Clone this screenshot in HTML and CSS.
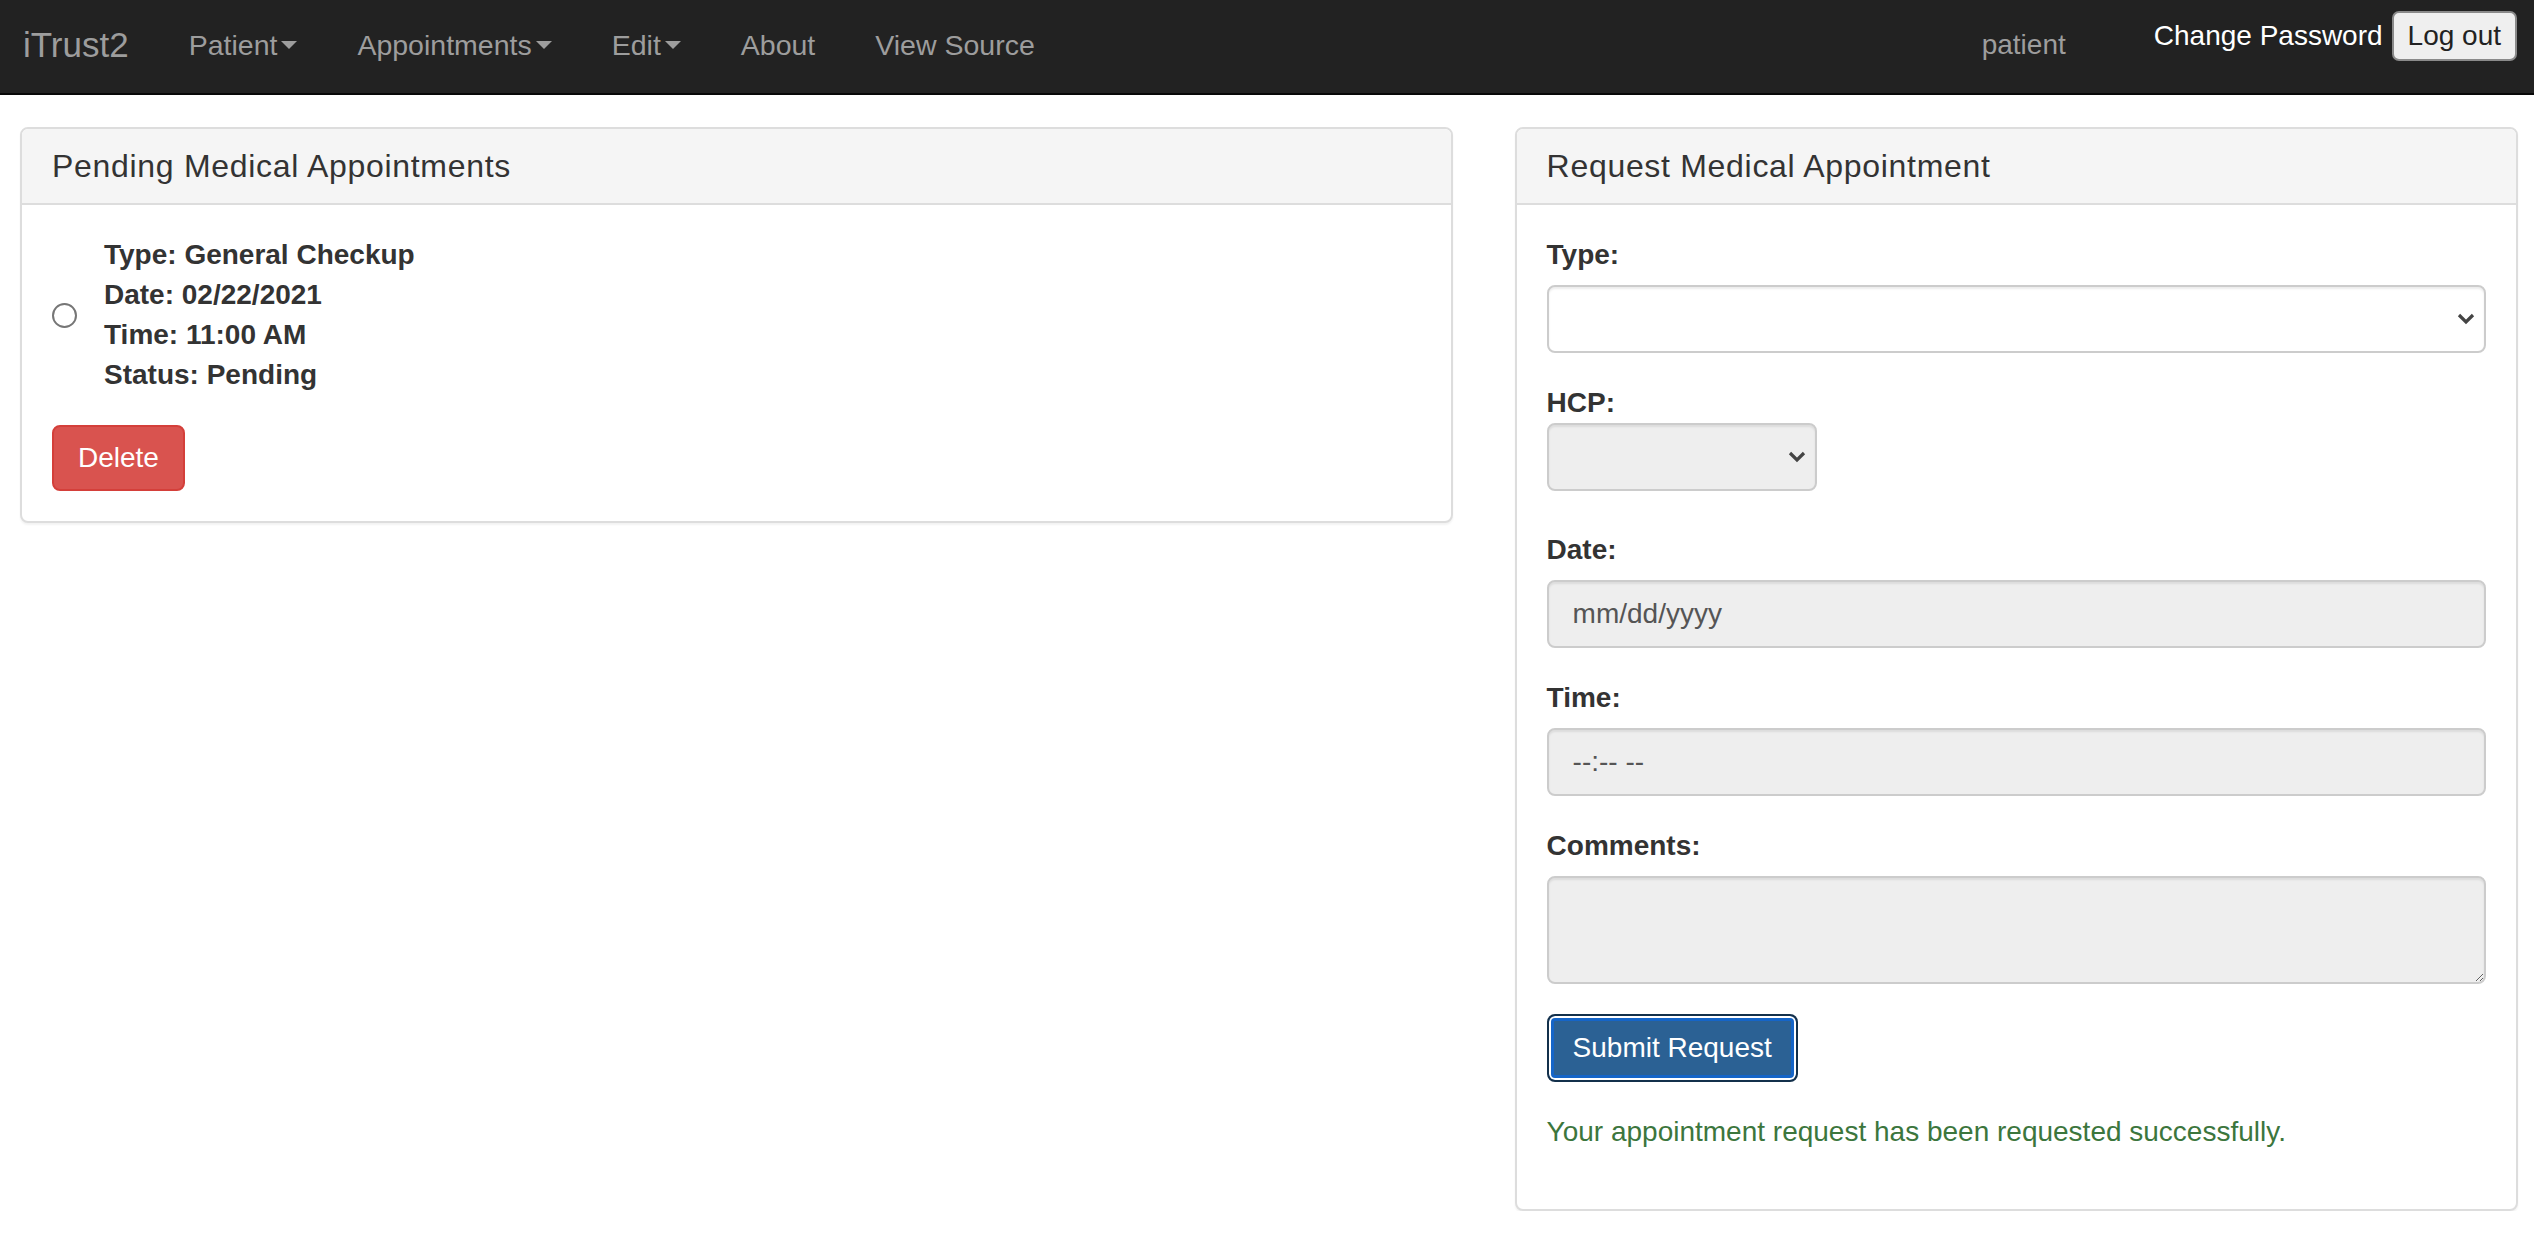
FILE: index.html
```html
<!DOCTYPE html>
<html lang="en">
<head>
<meta charset="utf-8">
<title>iTrust2 - Request Appointment</title>
<link rel="stylesheet" href="styles.css">
</head>
<body>
<nav class="navbar">
  <a class="brand" href="#">iTrust2</a>
  <ul class="nav">
    <li><a href="#">Patient<span class="caret"></span></a></li>
    <li><a href="#">Appointments<span class="caret"></span></a></li>
    <li><a href="#">Edit<span class="caret"></span></a></li>
    <li><a href="#">About</a></li>
    <li><a href="#">View Source</a></li>
  </ul>
  <div class="nav-right">
    <span class="user">patient</span>
    <div class="account">
      <a class="change-pw" href="#">Change Password</a>
      <button class="logout" type="button">Log out</button>
    </div>
  </div>
</nav>

<main class="content">
  <section class="panel">
    <div class="panel-heading"><h3 class="panel-title">Pending Medical Appointments</h3></div>
    <div class="panel-body">
      <label class="appt">
        <input class="radio" type="radio" name="appt">
        <span class="appt-lines">
          <span>Type: General Checkup</span>
          <span>Date: 02/22/2021</span>
          <span>Time: 11:00 AM</span>
          <span>Status: Pending</span>
        </span>
      </label>
      <button class="btn btn-danger" type="button">Delete</button>
    </div>
  </section>

  <section class="panel">
    <div class="panel-heading"><h3 class="panel-title">Request Medical Appointment</h3></div>
    <div class="panel-body">
      <div class="form-group">
        <label class="field-label">Type:</label>
        <div class="select-wrap">
          <select class="form-control select"><option></option></select>
          <svg class="chev" width="18" height="12" viewBox="0 0 18 12"><polyline points="2,2 9,9 16,2" fill="none" stroke="#444" stroke-width="3.2"/></svg>
        </div>
      </div>
      <div class="form-group group-hcp">
        <label class="field-label tight">HCP:</label>
        <div class="select-wrap small">
          <select class="form-control select disabled"><option></option></select>
          <svg class="chev" width="18" height="12" viewBox="0 0 18 12"><polyline points="2,2 9,9 16,2" fill="none" stroke="#444" stroke-width="3.2"/></svg>
        </div>
      </div>
      <div class="form-group">
        <label class="field-label">Date:</label>
        <input class="form-control disabled" type="text" value="mm/dd/yyyy" readonly>
      </div>
      <div class="form-group">
        <label class="field-label">Time:</label>
        <input class="form-control disabled" type="text" value="--:-- --" readonly>
      </div>
      <div class="form-group">
        <label class="field-label">Comments:</label>
        <textarea class="form-control disabled textarea"></textarea>
      </div>
      <button class="btn btn-primary" type="button">Submit Request</button>
      <p class="success">Your appointment request has been requested successfully.</p>
    </div>
  </section>
</main>
</body>
</html>
```

FILE: styles.css
```css
* { box-sizing: border-box; }

html, body {
  margin: 0;
  padding: 0;
  background: #fff;
}

body {
  font-family: "Liberation Sans", Arial, Helvetica, sans-serif;
  font-size: 28px;
  line-height: 40px;
  color: #333;
}

a { text-decoration: none; }

/* ---------- navbar ---------- */
.navbar {
  display: flex;
  align-items: center;
  height: 95px;
  background: #222;
  border-bottom: 2px solid #080808;
  padding: 0 17px 4px 0;
}

.brand {
  font-size: 35px;
  color: #9d9d9d;
  padding: 0 30px 0 23px;
  line-height: 40px;
}

.nav {
  display: flex;
  list-style: none;
  margin: 0;
  padding: 0;
}

.nav a {
  display: flex;
  align-items: center;
  padding: 0 30px;
  color: #9d9d9d;
  font-size: 28.5px;
}

.caret {
  display: inline-block;
  width: 0;
  height: 0;
  margin-left: 4px;
  border-top: 8px solid #9d9d9d;
  border-left: 8px solid transparent;
  border-right: 8px solid transparent;
}

.nav-right {
  margin-left: auto;
  display: flex;
  align-items: center;
  align-self: stretch;
}

.user {
  color: #9d9d9d;
  margin-right: 88px;
}

.account {
  display: flex;
  align-items: center;
  gap: 9px;
  align-self: flex-start;
  margin-top: 11px;
}

.change-pw {
  color: #fff;
}

.logout {
  height: 50px;
  padding: 0 14px;
  font-family: inherit;
  font-size: 28px;
  color: #222;
  background: #efefef;
  border: 2px solid #8a8a8a;
  border-radius: 7px;
}

/* ---------- layout ---------- */
.content {
  display: grid;
  grid-template-columns: 1432fr 1003fr;
  column-gap: 62px;
  align-items: start;
  padding: 32px 16px 0 20px;
}

.panel {
  background: #fff;
  border: 2px solid #ddd;
  border-radius: 8px;
  box-shadow: 0 2px 2px rgba(0, 0, 0, 0.05);
  overflow: hidden;
}

.panel-heading {
  background: #f5f5f5;
  border-bottom: 2px solid #ddd;
  padding: 20px 30px 19px;
}

.panel-title {
  margin: 0;
  font-size: 32px;
  font-weight: normal;
  line-height: 35px;
  letter-spacing: 0.7px;
  color: #333;
}

.panel-body {
  padding: 30px;
}

/* ---------- pending appointments ---------- */
.appt {
  display: flex;
  align-items: center;
  margin-bottom: 30px;
}

.radio {
  appearance: none;
  -webkit-appearance: none;
  width: 25px;
  height: 25px;
  margin: 0 27px 0 0;
  border: 2px solid #767676;
  border-radius: 50%;
  background: #fff;
}

.appt-lines {
  display: flex;
  flex-direction: column;
  font-weight: bold;
}

/* ---------- buttons ---------- */
.btn {
  display: inline-block;
  font-family: inherit;
  font-size: 28px;
  line-height: 40px;
  border-radius: 8px;
  color: #fff;
  padding: 11px 24px;
  border: 2px solid transparent;
}

.btn-danger {
  background: #d9534f;
  border-color: #d43f3a;
}

.btn-primary {
  padding: 12px 24px;
  background: #2b6194;
  border-color: #13304b;
  box-shadow: inset 0 0 0 2px #fff, inset 0 0 0 5px #1565c8;
}

/* ---------- form ---------- */
.form-group {
  margin-bottom: 30px;
}

.group-hcp {
  margin-bottom: 39px;
}

.field-label {
  display: block;
  font-weight: bold;
  margin-bottom: 10px;
}

.field-label.tight {
  margin-bottom: 0;
}

.form-control {
  display: block;
  width: 100%;
  height: 68px;
  padding: 12px 24px;
  font-family: inherit;
  font-size: 28px;
  line-height: 40px;
  color: #555;
  background: #fff;
  border: 2px solid #ccc;
  border-radius: 8px;
  box-shadow: inset 0 2px 2px rgba(0, 0, 0, 0.075);
  outline: none;
}

.form-control.disabled {
  background: #eee;
}

.select-wrap {
  position: relative;
}

.select-wrap.small {
  width: 270px;
}

.select {
  appearance: none;
  -webkit-appearance: none;
}

.chev {
  position: absolute;
  right: 11px;
  top: 28px;
}

.textarea {
  height: 108px;
  resize: vertical;
}

.success {
  margin: 30px 0 27px;
  color: #3c763d;
}
```
